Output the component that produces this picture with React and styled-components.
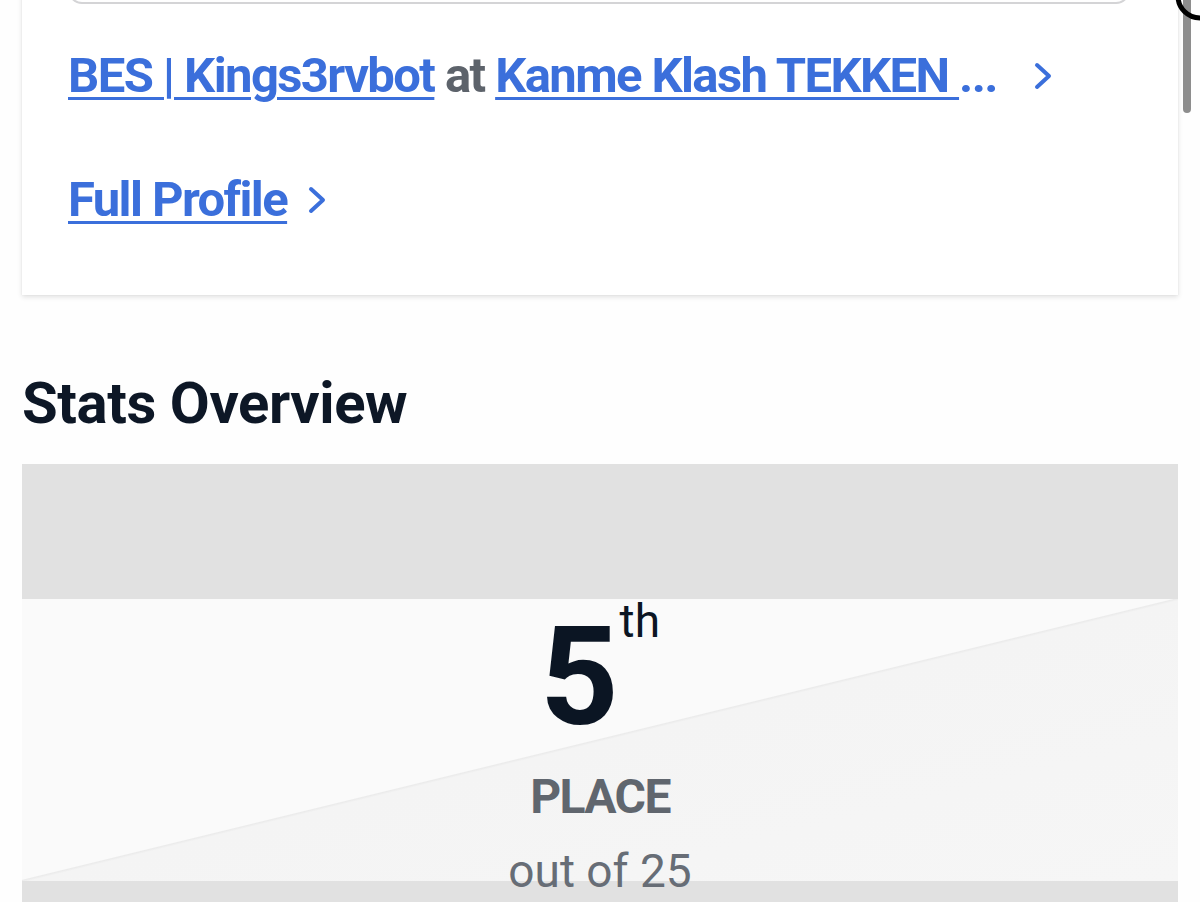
import React from "react";
import styled, { createGlobalStyle } from "styled-components";

const GlobalStyle = createGlobalStyle`
  html, body {
    margin: 0;
    padding: 0;
    background: #ffffff;
    font-family: Roboto, "Liberation Sans", Arial, sans-serif;
    overflow: hidden;
  }
`;

const Page = styled.div`
  position: relative;
  width: 1200px;
  height: 902px;
  overflow: hidden;
  background: #fefefe;
`;

const Content = styled.div`
  margin-top: -52px;
`;

const Card = styled.section`
  margin: 0 22px;
  padding: 0 48px 65px 46px;
  background: #ffffff;
  box-shadow: 0 2px 5px rgba(0, 0, 0, 0.12), 0 0 1px rgba(0, 0, 0, 0.08);
`;

const SearchBox = styled.div`
  height: 56px;
  border: 2px solid #d4d4d6;
  border-top: none;
  border-radius: 0 0 14px 14px;
  box-sizing: border-box;
`;

const LinkRow = styled.div`
  display: flex;
  align-items: center;
  height: 60px;
  margin-top: ${({ $gap }) => $gap}px;
  font-size: 49px;
  line-height: 60px;
  font-weight: 700;
  letter-spacing: -1.6px;
`;

const Truncate = styled.div`
  white-space: nowrap;
  overflow: hidden;
  color: #3b6fdb;
`;

const Link = styled.a`
  color: #3b6fdb;
  text-decoration: underline;
  text-decoration-thickness: 3px;
  text-underline-offset: 5px;
  cursor: pointer;
`;

const Muted = styled.span`
  color: #5d636b;
`;

const Chevron = styled.svg`
  flex: none;
  margin-left: ${({ $gap }) => $gap}px;
  width: 20px;
  height: 28px;
`;

const Heading = styled.h2`
  margin: 74px 22px 27px;
  font-size: 58px;
  line-height: 68px;
  font-weight: 700;
  color: #0d1726;
  letter-spacing: -0.4px;
`;

const StatCard = styled.div`
  margin: 0 22px;
  background: #e1e1e1;
`;

const Band = styled.div`
  height: 135px;
  background: #e1e1e1;
`;

const Place = styled.div`
  height: 282px;
  display: flex;
  flex-direction: column;
  align-items: center;
  padding-top: 10px;
  box-sizing: border-box;
  background: linear-gradient(
    to bottom right,
    #fafafa 0%,
    #fafafa 49.7%,
    #ebebeb 49.9%,
    #f4f4f4 50.3%,
    #f6f6f6 100%
  );
`;

const Rank = styled.div`
  display: flex;
  align-items: flex-start;
  color: #0b1523;
`;

const Number = styled.span`
  font-size: 137px;
  line-height: 136px;
  font-weight: 700;
  letter-spacing: -2px;
`;

const Suffix = styled.span`
  font-size: 46px;
  line-height: 46px;
  font-weight: 400;
  margin-left: 3px;
  margin-top: -11px;
`;

const Label = styled.div`
  margin-top: 24px;
  font-size: 48px;
  line-height: 56px;
  font-weight: 700;
  color: #60666e;
  letter-spacing: -1.6px;
`;

const Sub = styled.div`
  margin-top: 18px;
  font-size: 46px;
  line-height: 56px;
  font-weight: 400;
  color: #676d76;
`;

const Scrollbar = styled.div`
  position: absolute;
  top: -10px;
  left: 1183px;
  width: 8px;
  height: 123px;
  border-radius: 4px;
  background: #8d8d8d;
`;

const Corner = styled.svg`
  position: absolute;
  top: 0;
  right: 0;
  width: 30px;
  height: 30px;
`;

const ChevronIcon = ({ gap }) => (
  <Chevron $gap={gap} viewBox="0 0 20 28">
    <polyline points="4,3 16,14 4,25" fill="none" stroke="#3b6fdb" strokeWidth="4" strokeLinecap="round" strokeLinejoin="round" />
  </Chevron>
);

export default function App() {
  return (
    <Page>
      <GlobalStyle />
      <Content>
        <Card>
          <SearchBox />
          <LinkRow $gap={42}>
            <Truncate>
              <Link>BES | Kings3rvbot</Link>
              <Muted> at </Muted>
              <Link>Kanme Klash TEKKEN </Link>
              <span>...</span>
            </Truncate>
            <ChevronIcon gap={36} />
          </LinkRow>
          <LinkRow $gap={64}>
            <Link>Full Profile</Link>
            <ChevronIcon gap={20} />
          </LinkRow>
        </Card>
        <Heading>Stats Overview</Heading>
        <StatCard>
          <Band />
          <Place>
            <Rank>
              <Number>5</Number>
              <Suffix>th</Suffix>
            </Rank>
            <Label>PLACE</Label>
            <Sub>out of 25</Sub>
          </Place>
          <Band />
        </StatCard>
      </Content>
      <Scrollbar />
      <Corner viewBox="0 0 30 30">
        <circle cx="30" cy="-4" r="22" fill="none" stroke="#000" strokeWidth="5" />
      </Corner>
    </Page>
  );
}
